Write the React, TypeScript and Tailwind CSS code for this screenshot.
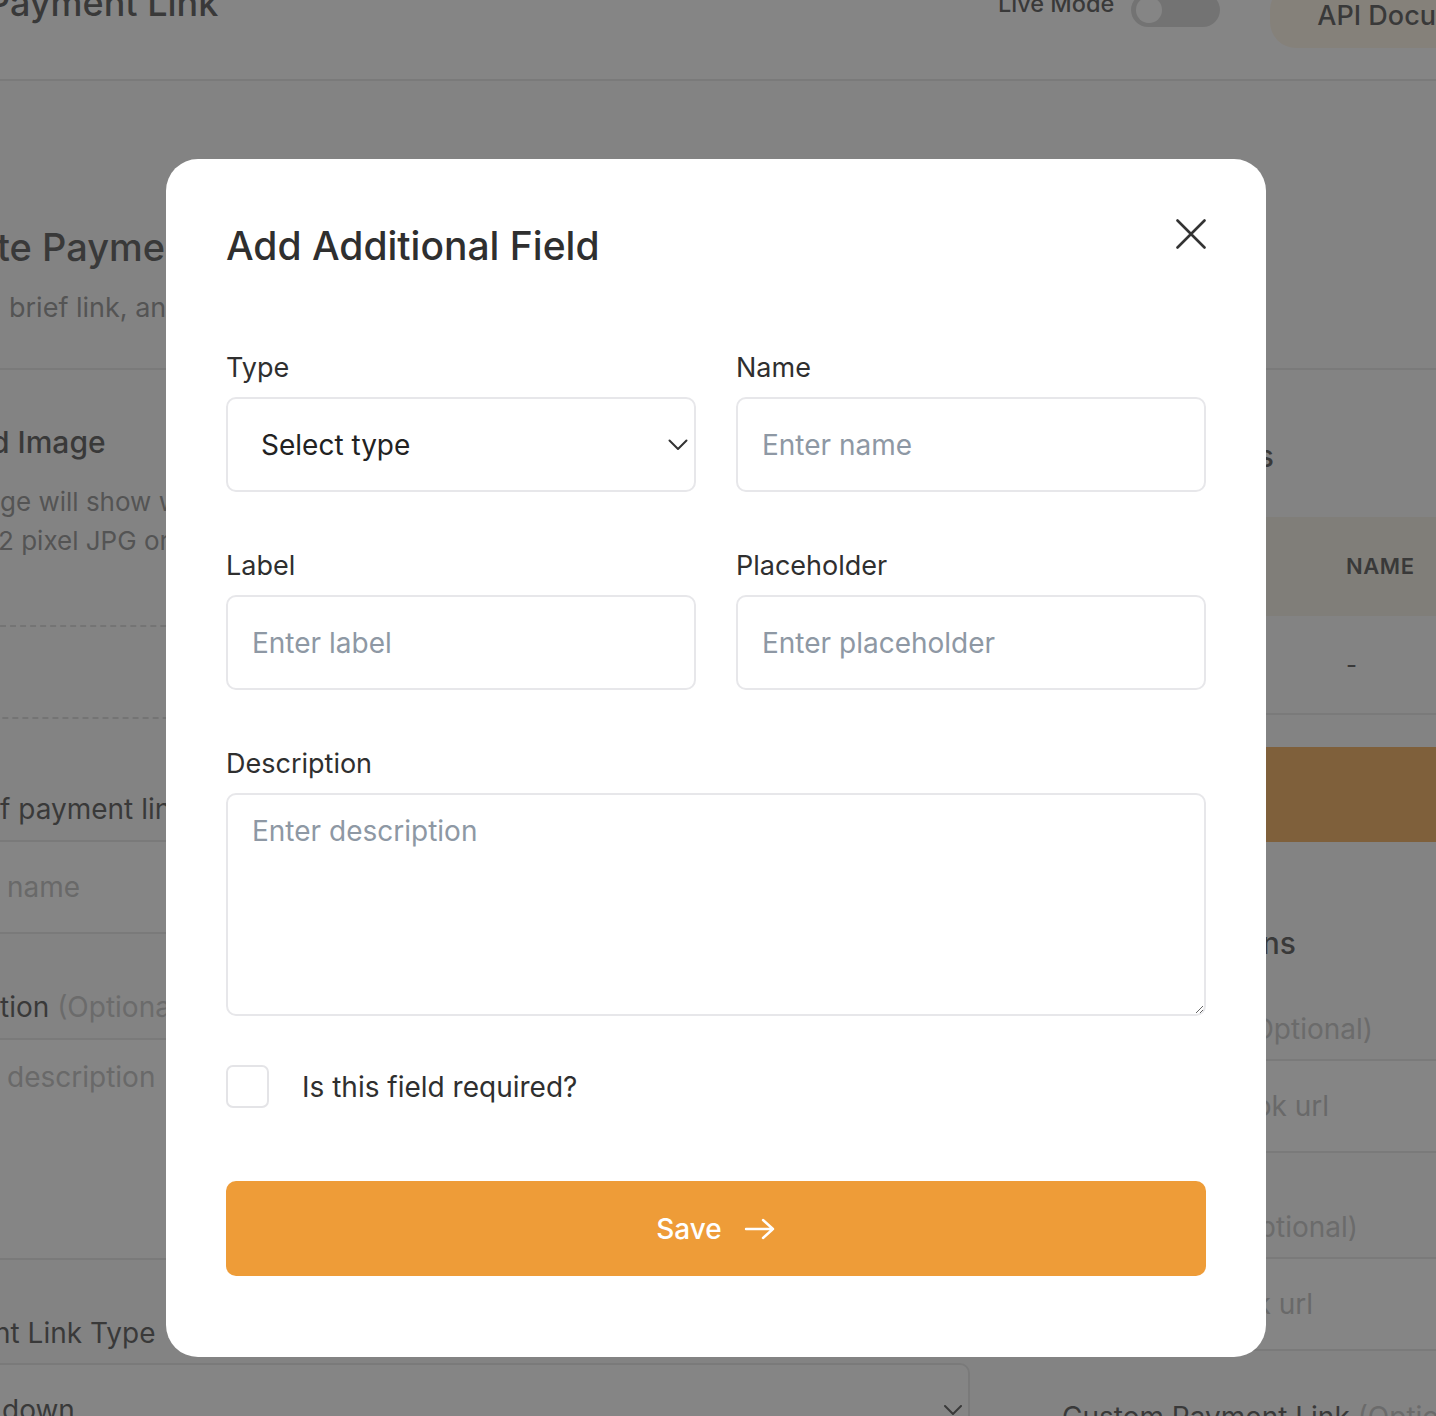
import React from "react";

const inputCls =
  "h-[95px] w-full rounded-[10px] border-2 border-[#e7e7ea] bg-white px-[24px] text-[28px] text-[#222] outline-none placeholder:text-[#8e98a4]";

function Field({ label, children }: { label: string; children: React.ReactNode }) {
  return (
    <div className="flex flex-col">
      <label className="mb-[13px] text-[27px] leading-[32px] text-[#2f2f2f]">{label}</label>
      {children}
    </div>
  );
}

function Background() {
  return (
    <div className="h-[1416px] w-full overflow-hidden bg-white text-[#333]">
      {/* header */}
      <header className="flex h-[81px] items-start border-b-2 border-[#e2e2e2] bg-white">
        <div className="w-[998px] shrink-0">
          <h1 className="-ml-[13px] -mt-[21px] whitespace-nowrap text-[36px] font-medium leading-[48px]">Payment Link</h1>
        </div>
        <span className="-mt-[12px] whitespace-nowrap text-[23.5px] font-medium leading-[32px]">Live Mode</span>
        <div className="-mt-[7px] ml-[17px] flex h-[34px] w-[89px] shrink-0 items-center rounded-full bg-[#cfcfcf] px-[5px]">
          <div className="h-[26px] w-[26px] rounded-full bg-white" />
        </div>
        <div className="-mt-[16px] ml-[50px] flex h-[64px] shrink-0 items-center whitespace-nowrap rounded-[26px] bg-[#fff3e2] pl-[47px] pr-[47px] text-[27px] font-medium">
          API Documentation
        </div>
      </header>

      <main className="bg-[#fafafa] pt-[142px]">
        <div className="border-b-2 border-[#e1e1e1] pb-[42px]">
          <h2 className="-ml-[3px] whitespace-nowrap text-[38px] font-medium leading-[48px]">te Payment Link</h2>
          <p className="mt-[19px] whitespace-nowrap pl-[9px] text-[27px] leading-[36px] text-[#7a7a7a]">
            brief link, and share it with your customers
          </p>
        </div>

        <div className="flex">
          {/* left column */}
          <div className="flex w-[970px] shrink-0 flex-col">
            <h3 className="-ml-[9px] mt-[52px] whitespace-nowrap text-[30px] font-medium leading-[40px]">d Image</h3>
            <div className="mt-[20px] text-[26px] leading-[39px] text-[#7a7a7a]">
              <p className="whitespace-nowrap">ge will show with your payment link</p>
              <p className="-ml-[2px] whitespace-nowrap">2 pixel JPG or PNG file</p>
            </div>
            <div className="-ml-[30px] mt-[65px] h-[94px] w-[1000px] rounded-[10px] border-2 border-dashed border-[#d2d2d2]" />
            <p className="mt-[72px] whitespace-nowrap text-[28px] leading-[36px]">f payment link</p>
            <div className="-ml-[30px] mt-[13px] flex h-[94px] w-[1000px] items-center rounded-[10px] border-2 border-[#e1e1e1] bg-white pl-[35px] text-[28px] text-[#b3b3b3]">
              name
            </div>
            <p className="mt-[55px] whitespace-nowrap text-[28px] leading-[36px]">
              tion <span className="text-[#b8b8b8]">(Optional)</span>
            </p>
            <div className="-ml-[30px] mt-[13px] h-[222px] w-[1000px] rounded-[10px] border-2 border-[#e1e1e1] bg-white pl-[35px] pt-[19px] text-[28px] leading-[36px] text-[#b3b3b3]">
              description
            </div>
            <p className="-ml-[6px] mt-[55px] whitespace-nowrap text-[28px] leading-[36px]">nt Link Type</p>
            <div className="-ml-[30px] mt-[12px] flex h-[94px] w-[1000px] items-center justify-between rounded-[10px] border-2 border-[#e1e1e1] bg-white pl-[30px] pr-[6px] text-[28px]">
              <span>down</span>
              <svg width="18" height="10" viewBox="0 0 18 10" fill="none">
                <path d="M1 1l8 8 8-8" stroke="#333" strokeWidth="2" strokeLinecap="round" strokeLinejoin="round" />
              </svg>
            </div>
          </div>

          {/* right column */}
          <div className="ml-[30px] flex w-[700px] shrink-0 flex-col">
            <div className="mt-[66px] flex w-[274px] justify-end">
              <h3 className="whitespace-nowrap text-[30px] font-medium leading-[40px]">Additional Fields</h3>
            </div>
            <div className="mt-[41px] flex h-[99px] items-center bg-[#f2ecdf] pl-[346px] text-[22px] font-semibold tracking-wide">
              NAME
            </div>
            <div className="flex h-[99px] items-center border-b-2 border-[#e1e1e1] pl-[346px] text-[24px]">-</div>
            <div className="mt-[32px] flex h-[95px] items-center rounded-[10px] bg-[#ee9c38] pl-[80px] text-[26px] font-medium text-white">
              + Add Field
            </div>
            <div className="mt-[81px] flex w-[296px] justify-end">
              <h3 className="whitespace-nowrap text-[30px] font-medium leading-[40px]">Redirections</h3>
            </div>
            <div className="mt-[48px] flex w-[373px] justify-end">
              <p className="whitespace-nowrap text-[28px] leading-[36px]">
                Success URL <span className="text-[#b8b8b8]">(Optional)</span>
              </p>
            </div>
            <div className="mt-[12px] flex h-[94px] items-center rounded-[10px] border-2 border-[#e1e1e1] bg-white">
              <div className="flex w-[327px] justify-end">
                <span className="whitespace-nowrap text-[28px] text-[#b3b3b3]">Enter success webhook url</span>
              </div>
            </div>
            <div className="mt-[56px] flex w-[358px] justify-end">
              <p className="whitespace-nowrap text-[28px] leading-[36px]">
                Failure URL <span className="text-[#b8b8b8]">(Optional)</span>
              </p>
            </div>
            <div className="mt-[12px] flex h-[94px] items-center rounded-[10px] border-2 border-[#e1e1e1] bg-white">
              <div className="flex w-[311px] justify-end">
                <span className="whitespace-nowrap text-[28px] text-[#b3b3b3]">Enter cancel webhook url</span>
              </div>
            </div>
            <p className="mt-[48px] whitespace-nowrap pl-[62px] text-[28px] leading-[36px]">
              Custom Payment Link <span className="text-[#b8b8b8]">(Optional)</span>
            </p>
          </div>
        </div>
      </main>
    </div>
  );
}

export default function App() {
  return (
    <div className="relative h-[1416px] w-full overflow-hidden font-['Inter','Noto_Sans',sans-serif]">
      <Background />
      <div className="absolute inset-0 flex items-start justify-center bg-[rgba(62,62,62,0.63)] pr-[4px] pt-[159px]">
        <div className="w-[1100px] rounded-[32px] bg-white px-[60px] pb-[81px] pt-[63px]">
          <div className="flex items-start justify-between">
            <h2 className="text-[39px] font-medium leading-[48px] text-[#2f2f2f]">Add Additional Field</h2>
            <button className="-mt-[3px] flex h-[30px] w-[30px] items-center justify-center" aria-label="Close">
              <svg width="30" height="30" viewBox="0 0 30 30" fill="none">
                <path d="M1.5 1.5l27 27M28.5 1.5l-27 27" stroke="#333" strokeWidth="2.6" strokeLinecap="round" />
              </svg>
            </button>
          </div>

          <div className="mt-[82px] grid grid-cols-2 gap-x-[40px] gap-y-[58px]">
            <Field label="Type">
              <div className="flex h-[95px] w-full items-center justify-between rounded-[10px] border-2 border-[#e7e7ea] bg-white pl-[33px] pr-[6px] text-[28px] text-[#222]">
                <span>Select type</span>
                <svg width="20" height="12" viewBox="0 0 20 12" fill="none">
                  <path d="M1.5 1.5l8.5 8.5 8.5-8.5" stroke="#333" strokeWidth="2" strokeLinecap="round" strokeLinejoin="round" />
                </svg>
              </div>
            </Field>
            <Field label="Name">
              <input className={inputCls} placeholder="Enter name" />
            </Field>
            <Field label="Label">
              <input className={inputCls} placeholder="Enter label" />
            </Field>
            <Field label="Placeholder">
              <input className={inputCls} placeholder="Enter placeholder" />
            </Field>
          </div>

          <div className="mt-[58px] flex flex-col">
            <label className="mb-[13px] text-[27px] leading-[32px] text-[#2f2f2f]">Description</label>
            <textarea
              className="h-[223px] w-full rounded-[10px] border-2 border-[#e7e7ea] bg-white px-[24px] pt-[18px] text-[28px] leading-[36px] text-[#222] outline-none placeholder:text-[#8e98a4]"
              placeholder="Enter description"
            />
          </div>

          <label className="mt-[49px] flex items-center gap-[33px]">
            <span className="h-[43px] w-[43px] shrink-0 rounded-[7px] border-2 border-[#e4e4e7] bg-white" />
            <span className="text-[28px] leading-[36px] text-[#2f2f2f]">Is this field required?</span>
          </label>

          <button className="mt-[73px] flex h-[95px] w-full items-center justify-center gap-[22px] rounded-[10px] bg-[#ee9c38] text-[28px] font-medium text-white">
            <span>Save</span>
            <svg width="32" height="24" viewBox="0 0 32 24" fill="none">
              <path d="M2 12h27M19 3l10 9-10 9" stroke="#fff" strokeWidth="2.4" strokeLinecap="round" strokeLinejoin="round" />
            </svg>
          </button>
        </div>
      </div>
    </div>
  );
}
